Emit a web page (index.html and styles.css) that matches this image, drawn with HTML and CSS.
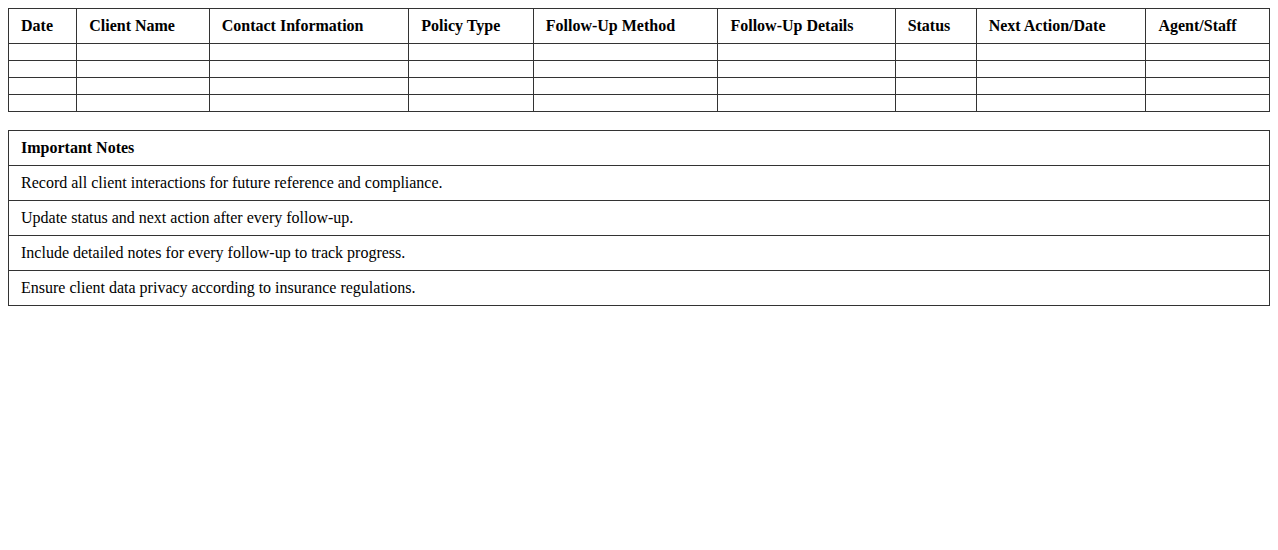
FILE: index.html
```html
<!DOCTYPE html>
<html>
<head>
<meta charset="utf-8">
<link rel="stylesheet" href="styles.css">
</head>
<body>
<table class="log">
  <thead>
    <tr>
      <th>Date</th>
      <th>Client Name</th>
      <th>Contact Information</th>
      <th>Policy Type</th>
      <th>Follow-Up Method</th>
      <th>Follow-Up Details</th>
      <th>Status</th>
      <th>Next Action/Date</th>
      <th>Agent/Staff</th>
    </tr>
  </thead>
  <tbody>
    <tr><td></td><td></td><td></td><td></td><td></td><td></td><td></td><td></td><td></td></tr>
    <tr><td></td><td></td><td></td><td></td><td></td><td></td><td></td><td></td><td></td></tr>
    <tr><td></td><td></td><td></td><td></td><td></td><td></td><td></td><td></td><td></td></tr>
    <tr><td></td><td></td><td></td><td></td><td></td><td></td><td></td><td></td><td></td></tr>
  </tbody>
</table>
<table class="notes">
  <thead>
    <tr><th>Important Notes</th></tr>
  </thead>
  <tbody>
    <tr><td>Record all client interactions for future reference and compliance.</td></tr>
    <tr><td>Update status and next action after every follow-up.</td></tr>
    <tr><td>Include detailed notes for every follow-up to track progress.</td></tr>
    <tr><td>Ensure client data privacy according to insurance regulations.</td></tr>
  </tbody>
</table>
</body>
</html>
```
FILE: styles.css
```css
body {
  margin: 8px;
  font-family: "Liberation Serif", "Times New Roman", serif;
  font-size: 16px;
  color: #000;
  background: #fff;
}
table {
  width: 100%;
  border-collapse: collapse;
}
th, td {
  border: 1px solid #333;
  padding: 8px 12px;
  text-align: left;
}
th {
  font-weight: bold;
}
.log {
  margin-bottom: 18px;
}
```
